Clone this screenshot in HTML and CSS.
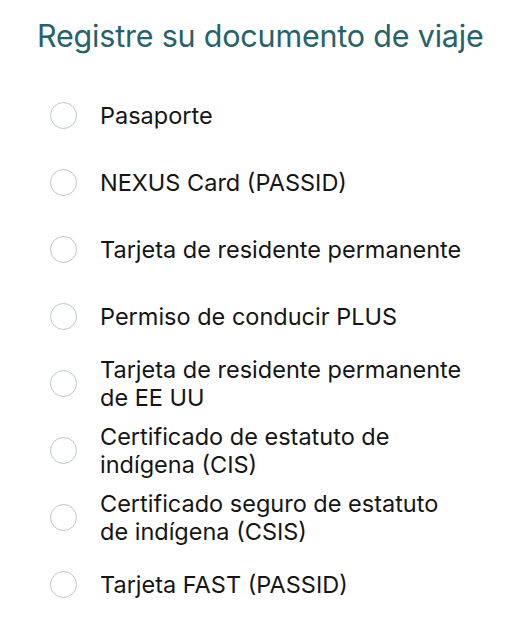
FILE: index.html
```html
<!DOCTYPE html>
<html lang="es">
<head>
<meta charset="utf-8">
<link rel="stylesheet" href="styles.css">
</head>
<body>
<main class="page">
  <h1 class="title">Registre su documento de viaje</h1>
  <ul class="options">
    <li class="option"><span class="radio"></span><span class="label">Pasaporte</span></li>
    <li class="option"><span class="radio"></span><span class="label">NEXUS Card (PASSID)</span></li>
    <li class="option"><span class="radio"></span><span class="label">Tarjeta de residente permanente</span></li>
    <li class="option"><span class="radio"></span><span class="label">Permiso de conducir PLUS</span></li>
    <li class="option"><span class="radio"></span><span class="label">Tarjeta de residente permanente<br>de EE UU</span></li>
    <li class="option"><span class="radio"></span><span class="label">Certificado de estatuto de<br>indígena (CIS)</span></li>
    <li class="option"><span class="radio"></span><span class="label">Certificado seguro de estatuto<br>de indígena (CSIS)</span></li>
    <li class="option"><span class="radio"></span><span class="label">Tarjeta FAST (PASSID)</span></li>
  </ul>
</main>
</body>
</html>
```

FILE: styles.css
```css
html, body {
  margin: 0;
  padding: 0;
  background: #ffffff;
}
body {
  font-family: "Inter", "Liberation Sans", sans-serif;
  color: #111111;
}
.page {
  display: flex;
  flex-direction: column;
  padding: 15px 0 0 0;
}
.title {
  margin: 0 0 0 37px;
  font-size: 30.5px;
  font-weight: 400;
  line-height: 42px;
  color: #27626b;
  letter-spacing: -0.2px;
}
.options {
  list-style: none;
  margin: 25px 0 0 0;
  padding: 0;
  display: flex;
  flex-direction: column;
}
.option {
  height: 67px;
  display: flex;
  align-items: center;
  gap: 23px;
  padding-left: 50px;
}
.radio {
  flex: none;
  width: 25px;
  height: 25px;
  border: 1.5px solid #b9c6c6;
  border-radius: 50%;
}
.label {
  font-size: 23.5px;
  line-height: 28px;
  color: #151515;
}
```
